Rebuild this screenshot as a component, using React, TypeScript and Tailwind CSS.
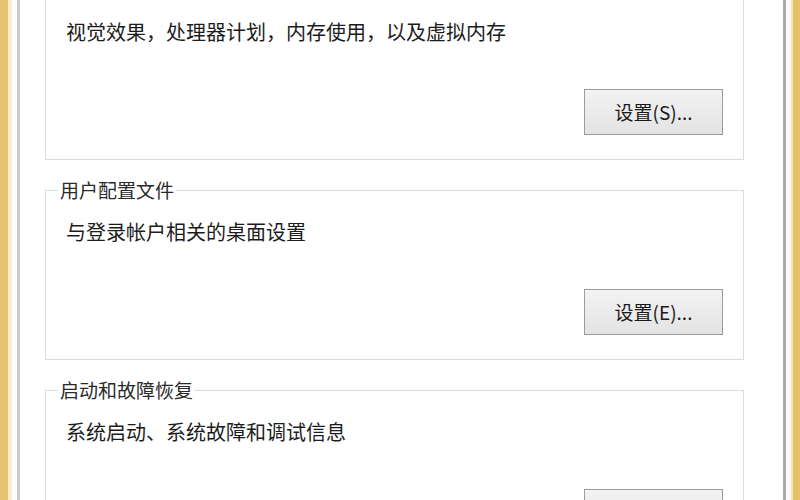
import { ReactNode } from "react"

const font = { fontFamily: '"Noto Sans CJK SC", "Noto Sans", sans-serif' }

function Group({ title, desc, button }: { title: string; desc: string; button: string }) {
  return (
    <fieldset className="border border-[#dcdcdc] h-[180px] px-[20px] pt-[19px] pb-0 min-w-0">
      <legend className="ml-[-8px] px-[2px] text-[19px] leading-[20px] text-[#2a2a2a]">{title}</legend>
      <p className="text-[20px] leading-[26px] text-[#1c1c1c]">{desc}</p>
      <div className="flex justify-end mt-[44px]">
        <Button>{button}</Button>
      </div>
    </fieldset>
  )
}

function Button({ children }: { children: ReactNode }) {
  return (
    <button className="w-[139px] h-[46px] border border-[#9c9c9c] bg-gradient-to-b from-[#f3f3f3] to-[#e3e3e3] text-[19px] text-[#1a1a1a]">
      {children}
    </button>
  )
}

export default function App() {
  return (
    <div className="w-[800px] h-[500px] flex bg-white overflow-hidden" style={font}>
      <div className="w-[8px] bg-[#e6c36f]" />
      <div className="w-[4px] bg-[#f8eecb]" />
      <div className="w-[5px] bg-[#fdfdfd]" />
      <div className="w-[3px] bg-[#c9c9d0]" />
      <main className="flex-1 pl-[25px] pr-[39px] overflow-hidden">
        <div className="flex flex-col gap-[20px] mt-[-20px]">
          <Group title="性能" desc="视觉效果，处理器计划，内存使用，以及虚拟内存" button="设置(S)..." />
          <Group title="用户配置文件" desc="与登录帐户相关的桌面设置" button="设置(E)..." />
          <Group title="启动和故障恢复" desc="系统启动、系统故障和调试信息" button="设置(T)..." />
        </div>
      </main>
      <div className="w-[3px] bg-[#a9a9b0]" />
      <div className="w-[5px] bg-[#fbfaf4]" />
      <div className="w-[2px] bg-[#f3e5b5]" />
      <div className="w-[7px] bg-[#e3c264]" />
    </div>
  )
}
